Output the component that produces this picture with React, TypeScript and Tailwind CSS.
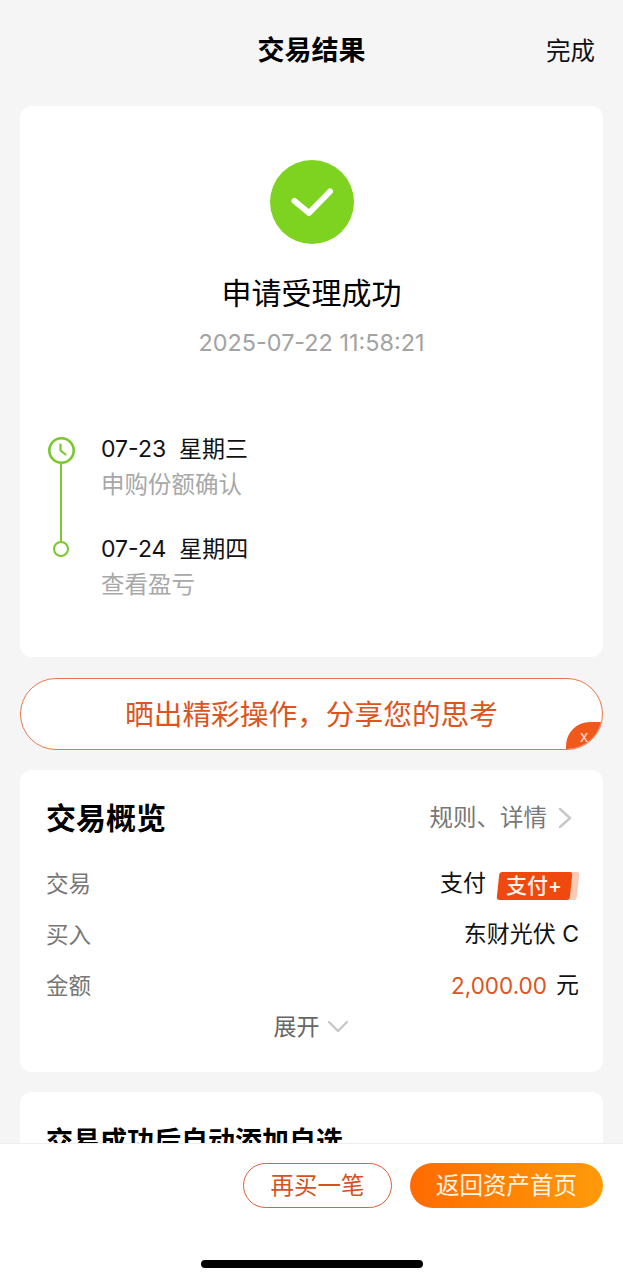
import React from 'react';

const font = { fontFamily: 'Inter, "Noto Sans CJK SC", sans-serif' };

function Row({ label, children }: { label: string; children: React.ReactNode }) {
  return (
    <div className="flex h-[51px] items-center justify-between">
      <span className="text-[22.5px] text-[#777777]">{label}</span>
      <div className="flex items-center text-[23px] text-[#111111]">{children}</div>
    </div>
  );
}

function Chevron({ down }: { down?: boolean }) {
  return (
    <svg width="20" height="20" viewBox="0 0 20 20" fill="none" stroke="#c8c8c8" strokeWidth="2.4" strokeLinecap="round" strokeLinejoin="round">
      {down ? <path d="M1 5l9 9 9-9" /> : <path d="M5 1l10 9-10 9" />}
    </svg>
  );
}

export default function App() {
  return (
    <div className="flex h-[1280px] w-[623px] flex-col overflow-hidden bg-[#f5f5f5]" style={font}>
      <div className="min-h-0 flex-1 overflow-hidden">
        <div className="relative flex h-[106px] items-start justify-center pt-[31px]">
          <h1 className="text-[27px] leading-[40px] font-bold text-black">交易结果</h1>
          <span className="absolute top-[31px] right-[28px] text-[24.5px] leading-[40px] text-[#111111]">完成</span>
        </div>

        <div className="mx-5 flex h-[551px] flex-col rounded-xl bg-white">
          <div className="mt-[54px] flex justify-center">
            <div className="flex h-[84px] w-[84px] items-center justify-center rounded-full bg-[#7ed321]">
              <svg width="42" height="28" viewBox="0 0 42 28" fill="none" stroke="white" strokeWidth="6" strokeLinecap="round" strokeLinejoin="round">
                <path d="M3.5 13L18 25L39 3.5" />
              </svg>
            </div>
          </div>
          <p className="mt-[27px] text-center text-[30px] leading-[44px] text-black">申请受理成功</p>
          <p className="mt-[10px] text-center text-[23.4px] leading-[36px] text-[#a3a3a3]">2025-07-22 11:58:21</p>

          <div className="mt-[70px] flex pl-[27px]">
            <div className="flex w-[28px] flex-col items-center pt-[6px]">
              <svg width="27" height="27" viewBox="0 0 27 27" fill="none" stroke="#7ac72e" className="shrink-0">
                <circle cx="13.5" cy="13.5" r="12.2" strokeWidth="2.6" />
                <path d="M12.5 7.5V13.5l5 4" strokeWidth="2.2" strokeLinecap="round" strokeLinejoin="round" />
              </svg>
              <div className="h-[77px] w-[2px] bg-[#7ac72e]" />
              <div className="h-[16px] w-[16px] shrink-0 rounded-full border-2 border-[#7ac72e]" />
            </div>
            <div className="ml-[26px] flex flex-col">
              <p className="text-[23px] leading-[36px] text-[#111111]">07-23&nbsp;&nbsp;星期三</p>
              <p className="text-[23.5px] leading-[36px] text-[#a8a8a8]">申购份额确认</p>
              <p className="mt-[28px] text-[23px] leading-[36px] text-[#111111]">07-24&nbsp;&nbsp;星期四</p>
              <p className="text-[23.5px] leading-[36px] text-[#a8a8a8]">查看盈亏</p>
            </div>
          </div>
        </div>

        <div className="relative mx-5 mt-[21px] flex h-[72px] items-center justify-center overflow-hidden rounded-[36px] border border-[#e8774a] bg-white">
          <span className="pt-[2px] text-[28.7px] leading-[40px] text-[#dd5420]">{'晒出精彩操作\uFF0C分享您的思考'}</span>
          <div className="absolute right-0 bottom-0 flex h-[27px] w-[36px] items-center justify-center rounded-tl-[24px] bg-[#f0591c] text-[16px] text-[#ffd9c8]">x</div>
        </div>

        <div className="mx-5 mt-5 h-[302px] rounded-xl bg-white pt-[26px] pr-[24px] pl-[26px]">
          <div className="flex items-center justify-between">
            <h2 className="text-[30px] leading-[44px] font-bold text-black">交易概览</h2>
            <div className="mr-[4px] flex items-center gap-[8px]">
              <span className="text-[23.5px] text-[#777777]">规则、详情</span>
              <Chevron />
            </div>
          </div>
          <div className="mt-[18px]">
            <Row label="交易">
              <span>支付</span>
              <span className="relative mt-[4px] ml-[12px] flex h-[28px] w-[73px] -skew-x-6 items-center justify-center rounded-[3px] bg-[#f0490f] text-[21px] font-medium text-[#fff4ec] shadow-[7px_0_0_#fbc9b4]">
                <span className="skew-x-6">支付+</span>
              </span>
              <span className="w-[8px]" />
            </Row>
            <Row label="买入">
              <span>东财光伏 C</span>
            </Row>
            <Row label="金额">
              <span className="text-[22.5px] text-[#dd5420]">2,000.00</span>
              <span className="ml-[9px]">元</span>
            </Row>
          </div>
          <div className="-mt-[2px] flex items-center justify-center gap-[8px] pr-[4px]">
            <span className="text-[23px] leading-[36px] text-[#666666]">展开</span>
            <Chevron down />
          </div>
        </div>

        <div className="mx-5 mt-5 h-[300px] rounded-xl bg-white px-[26px] pt-[30px]">
          <h2 className="text-[27px] leading-[40px] font-bold text-black">交易成功后自动添加自选</h2>
        </div>
      </div>

      <div className="h-[137px] shrink-0 border-t border-[#eeeeee] bg-white">
        <div className="mt-[19px] mr-5 flex justify-end gap-[18px]">
          <button className="h-[45px] w-[149px] rounded-full border border-[#d9623a] bg-white text-[23.5px] text-[#d4521f]">再买一笔</button>
          <button className="h-[45px] w-[193px] rounded-full bg-gradient-to-r from-[#ff6a00] to-[#ff9a0a] text-[23.5px] text-[#fff3e6]">返回资产首页</button>
        </div>
        <div className="mt-[52px] flex justify-center">
          <div className="h-2 w-[222px] rounded-full bg-black" />
        </div>
      </div>
    </div>
  );
}
